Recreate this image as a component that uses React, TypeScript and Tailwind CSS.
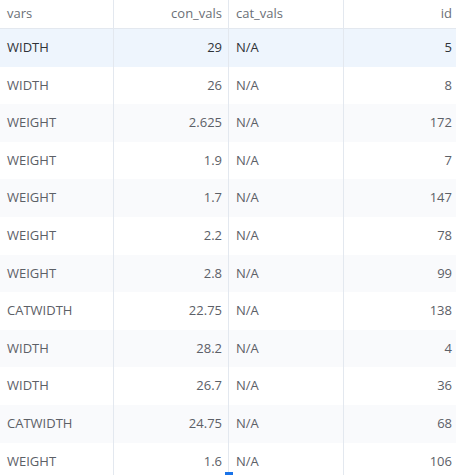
const rows: [string, string, string, string][] = [
  ['WIDTH', '29', 'N/A', '5'],
  ['WIDTH', '26', 'N/A', '8'],
  ['WEIGHT', '2.625', 'N/A', '172'],
  ['WEIGHT', '1.9', 'N/A', '7'],
  ['WEIGHT', '1.7', 'N/A', '147'],
  ['WEIGHT', '2.2', 'N/A', '78'],
  ['WEIGHT', '2.8', 'N/A', '99'],
  ['CATWIDTH', '22.75', 'N/A', '138'],
  ['WIDTH', '28.2', 'N/A', '4'],
  ['WIDTH', '26.7', 'N/A', '36'],
  ['CATWIDTH', '24.75', 'N/A', '68'],
  ['WEIGHT', '1.6', 'N/A', '106'],
];

export default function App() {
  return (
    <div className="relative h-[475px] w-[456px] overflow-hidden bg-white font-['Open_Sans',sans-serif] text-[13px]">
      <div className="grid h-[29px] grid-cols-[114px_115px_115px_1fr] border-b border-[#e3e8ef] text-[#6b6f76]">
        <div className="flex items-center border-r border-[#e3e8ef] px-[7px]">vars</div>
        <div className="flex items-center justify-end border-r border-[#e3e8ef] px-[6px]">con_vals</div>
        <div className="flex items-center border-r border-[#e3e8ef] px-[7px]">cat_vals</div>
        <div className="flex items-center justify-end px-[4px]">id</div>
      </div>
      {rows.map((r, i) => {
        const bg = i === 0 ? 'bg-[#eef5fd] text-[#2f3338]' : i % 2 === 0 ? 'bg-[#f9fafc] text-[#5c6067]' : 'bg-white text-[#5c6067]';
        return (
          <div key={i} className={`grid h-[37.6px] grid-cols-[114px_115px_115px_1fr] ${bg}`}>
            <div className="flex items-center border-r border-[#e3e8ef] px-[7px]">{r[0]}</div>
            <div className="flex items-center justify-end border-r border-[#e3e8ef] px-[6px]">{r[1]}</div>
            <div className="flex items-center border-r border-[#e3e8ef] px-[7px]">{r[2]}</div>
            <div className="flex items-center justify-end px-[4px]">{r[3]}</div>
          </div>
        );
      })}
      <div className="absolute bottom-0 left-[225px] h-[3px] w-[8px] bg-[#1a73e8]" />
    </div>
  );
}
